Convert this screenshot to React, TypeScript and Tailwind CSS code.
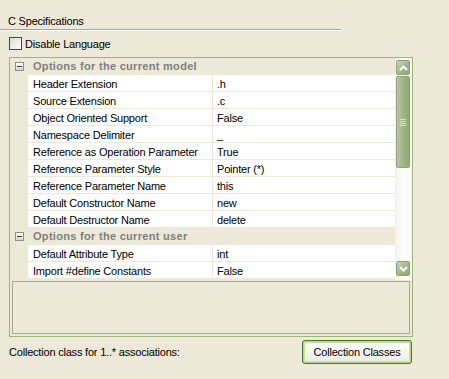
import React from "react";

const modelRows: [string, string][] = [
  ["Header Extension", ".h"],
  ["Source Extension", ".c"],
  ["Object Oriented Support", "False"],
  ["Namespace Delimiter", "_"],
  ["Reference as Operation Parameter", "True"],
  ["Reference Parameter Style", "Pointer (*)"],
  ["Reference Parameter Name", "this"],
  ["Default Constructor Name", "new"],
  ["Default Destructor Name", "delete"],
];

const userRows: [string, string][] = [
  ["Default Attribute Type", "int"],
  ["Import #define Constants", "False"],
];

function Category({ title }: { title: string }) {
  return (
    <div className="flex h-[17px] items-center bg-[#ece9d8]">
      <div className="flex w-[18px] justify-center pl-[1px]">
        <div className="flex h-[9px] w-[9px] items-center justify-center border border-[#8f8f83] bg-gradient-to-b from-white to-[#d9d6c6]">
          <div className="h-[1px] w-[5px] bg-[#3a3a3a]" />
        </div>
      </div>
      <span className="pl-[5px] font-bold tracking-[0.3px] text-[#7f7f7f]">{title}</span>
    </div>
  );
}

function Row({ name, value }: { name: string; value: string }) {
  return (
    <div className="flex h-[17px]">
      <div className="w-[18px] bg-[#ece9d8]" />
      <div className="flex flex-1 border-b border-[#ebe9dc] bg-white">
        <div className="w-[185px] truncate border-r border-[#ebe9dc] pl-[5px] pt-[1px] leading-[16px]">
          {name}
        </div>
        <div className="flex-1 pl-[4px] pt-[1px] leading-[16px]">{value}</div>
      </div>
    </div>
  );
}

function Chevron({ up }: { up?: boolean }) {
  return (
    <svg width="9" height="6" viewBox="0 0 9 6">
      <path
        d={up ? "M1 5 L4.5 1.5 L8 5" : "M1 1 L4.5 4.5 L8 1"}
        fill="none"
        stroke="white"
        strokeWidth="2"
      />
    </svg>
  );
}

function ScrollBtn({ up }: { up?: boolean }) {
  return (
    <div className="flex h-[15px] w-[14px] items-center justify-center rounded-[2px] border border-[#8fa277] bg-gradient-to-br from-[#c8d5b2] via-[#a6b98c] to-[#8ea272]">
      <Chevron up={up} />
    </div>
  );
}

export default function App() {
  return (
    <div className="h-[379px] w-[449px] overflow-hidden bg-[#ece9d8] font-['Liberation_Sans',Arial,sans-serif] text-[11px] tracking-[-0.2px] text-black">
      <div className="pl-[8px] pt-[15px] leading-[13px]">C Specifications</div>
      <div className="mt-[1px] h-[2px] w-[341px] border-t border-b border-t-[#aca899] border-b-white" />

      <label className="ml-[9px] mt-[6px] flex h-[13px] items-center gap-[3px]">
        <span className="h-[13px] w-[13px] border border-[#1c5180] bg-gradient-to-br from-[#dcdbd5] to-white" />
        <span className="pt-[2px] leading-[13px]">Disable Language</span>
      </label>

      {/* property grid */}
      <div className="ml-[9px] mt-[7px] flex h-[280px] w-[404px] flex-col border border-[#9fb57d]">
        <div className="flex h-[222px]">
          <div className="flex-1 overflow-hidden">
            <Category title="Options for the current model" />
            {modelRows.map(([n, v]) => (
              <Row key={n} name={n} value={v} />
            ))}
            <Category title="Options for the current user" />
            {userRows.map(([n, v]) => (
              <Row key={n} name={n} value={v} />
            ))}
          </div>
          <div className="flex w-[17px] flex-col items-start bg-gradient-to-r from-[#f2f1ea] via-white to-[#f7f6f1] pl-[1px] pt-[2px]">
            <ScrollBtn up />
            <div className="mt-[1px] flex h-[92px] w-[14px] flex-col items-center justify-center gap-[1px] rounded-[2px] border border-[#8fa277] bg-gradient-to-r from-[#b9c9a0] via-[#a0b485] to-[#93a877]">
              <div className="h-[1px] w-[6px] bg-[#d8e2c8]" />
              <div className="h-[1px] w-[6px] bg-[#d8e2c8]" />
              <div className="h-[1px] w-[6px] bg-[#d8e2c8]" />
              <div className="h-[1px] w-[6px] bg-[#d8e2c8]" />
            </div>
            <div className="flex-1" />
            <div className="mb-[4px]">
              <ScrollBtn />
            </div>
          </div>
        </div>
        <div className="mx-[2px] mt-[1px] h-[53px] border border-[#aca899] bg-[#ece9d8]" />
      </div>

      <div className="ml-[9px] mt-[3px] flex w-[403px] items-center justify-between">
        <span className="leading-[13px]">Collection class for 1..* associations:</span>
        <button className="h-[24px] w-[110px] rounded-[3px] border border-[#4e7a1f] bg-gradient-to-b from-white to-[#ecebe0] shadow-[inset_0_0_0_1px_#b3d38a,inset_0_0_0_2px_#c9e0a6]">
          Collection Classes
        </button>
      </div>
    </div>
  );
}
